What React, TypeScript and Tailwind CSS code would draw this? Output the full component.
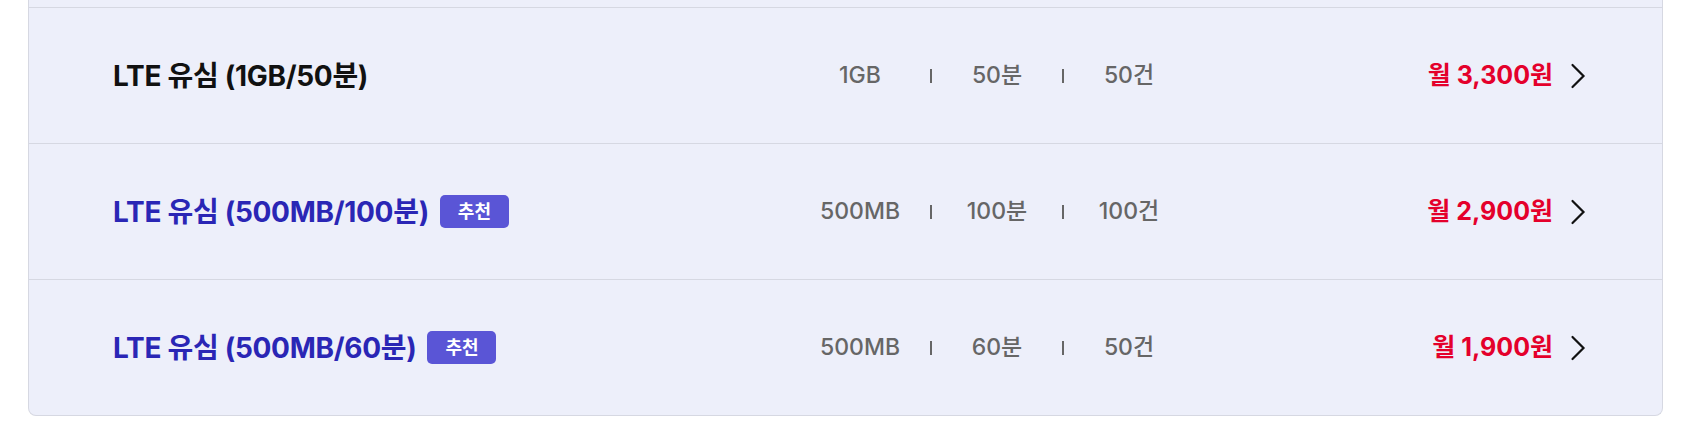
import React from "react";

type Plan = {
  title: string;
  recommended: boolean;
  data: string;
  voice: string;
  sms: string;
  price: string;
};

const plans: Plan[] = [
  { title: "LTE 유심 (1GB/50분)", recommended: false, data: "1GB", voice: "50분", sms: "50건", price: "월 3,300원" },
  { title: "LTE 유심 (500MB/100분)", recommended: true, data: "500MB", voice: "100분", sms: "100건", price: "월 2,900원" },
  { title: "LTE 유심 (500MB/60분)", recommended: true, data: "500MB", voice: "60분", sms: "50건", price: "월 1,900원" },
];

const font = { fontFamily: '"Inter", "Noto Sans CJK KR", sans-serif' };

function Chevron() {
  return (
    <svg width="16" height="26" viewBox="0 0 16 26" fill="none" className="shrink-0">
      <polyline points="2.5,2 13.5,13 2.5,24" stroke="#111" strokeWidth="2.2" strokeLinecap="round" strokeLinejoin="miter" />
    </svg>
  );
}

function Row({ plan }: { plan: Plan }) {
  return (
    <div className="flex h-[136px] items-center border-t border-[#d6d8e2] pl-[84px] pr-[76px]">
      <div className="flex w-[677px] items-center gap-[11px]">
        <span
          className={`text-[28px] font-bold tracking-[-0.3px] ${plan.recommended ? "text-[#2a26b5]" : "text-[#111111]"}`}
        >
          {plan.title}
        </span>
        {plan.recommended && (
          <span className="flex h-[33px] w-[69px] items-center justify-center rounded-[5px] bg-[#5a55d6] text-[18px] font-bold text-white">
            추천
          </span>
        )}
      </div>
      <div className="flex items-center text-[23px] font-medium text-[#666666]">
        <span className="w-[140px] text-center">{plan.data}</span>
        <span className="h-[14px] w-[2px] bg-[#666666]" />
        <span className="w-[130px] text-center">{plan.voice}</span>
        <span className="h-[14px] w-[2px] bg-[#666666]" />
        <span className="w-[130px] text-center">{plan.sms}</span>
      </div>
      <div className="flex flex-1 items-center justify-end gap-[17px]">
        <span className="text-[25px] font-bold text-[#e4002b]">{plan.price}</span>
        <Chevron />
      </div>
    </div>
  );
}

export default function App() {
  return (
    <div className="h-[430px] w-[1684px] bg-white" style={font}>
      <div className="ml-[28px] w-[1635px] overflow-hidden rounded-b-[8px] border-x border-b border-[#d6d8e2] bg-[#edeffa]">
        <div className="h-[7px]" />
        {plans.map((p) => (
          <Row key={p.title} plan={p} />
        ))}
      </div>
    </div>
  );
}
